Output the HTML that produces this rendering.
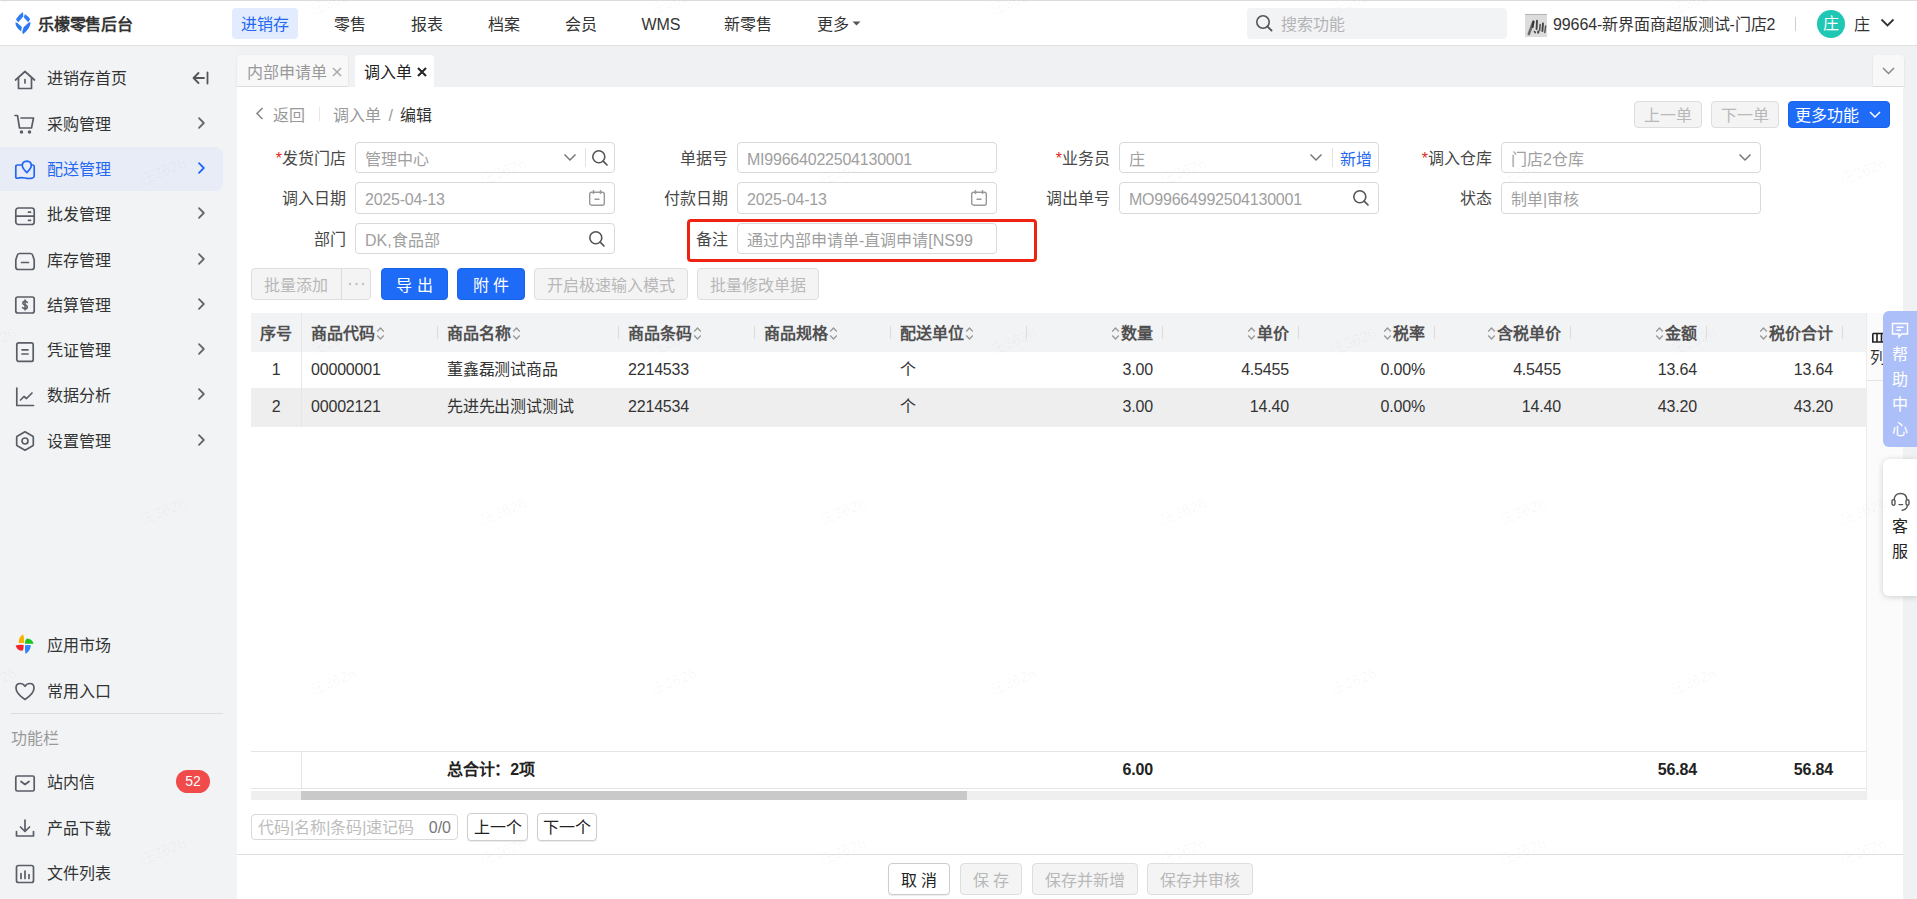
<!DOCTYPE html>
<html lang="zh-CN">
<head>
<meta charset="utf-8">
<title>调入单</title>
<style>
*{box-sizing:border-box;margin:0;padding:0}
html,body{width:1917px;height:899px;overflow:hidden;background:#fff}
body{font-family:"Liberation Sans",sans-serif;font-size:16px;color:#333;position:relative}
.abs{position:absolute}
svg{display:block}
/* header */
#hdr{position:absolute;left:0;top:0;width:1917px;height:46px;background:#fff;border-top:1px solid #dcdcdc;border-bottom:1px solid #dfe0e2}
#logo-t{position:absolute;left:38px;top:14px;font-size:16px;font-weight:bold;line-height:20px;color:#333;letter-spacing:-0.2px;white-space:nowrap}
.nav{position:absolute;top:7px;height:31px;line-height:34px;font-size:16px;color:#333;white-space:nowrap;text-align:center}
.nav.on{background:#e3ecff;color:#2468f2;border-radius:4px}
#srch{position:absolute;left:1247px;top:7px;width:260px;height:31px;background:#f2f3f5;border-radius:4px}
#srch span{position:absolute;left:34px;top:0;line-height:34px;font-size:16px;color:#b4b4b4}
/* sidebar */
#side{position:absolute;left:0;top:46px;width:237px;height:853px;background:#f2f3f5}
.mi{position:absolute;left:0;width:237px;height:44px}
.mi .t{position:absolute;left:47px;top:0;line-height:46px;font-size:16px;color:#333;white-space:nowrap}
.mi .ic{position:absolute;left:14px;top:11px;width:22px;height:22px}
.mi .ar{position:absolute;left:196px;top:14px;width:10px;height:14px}
.mi.on{background:#e8ecf6;border-radius:0 8px 8px 0;width:223px}
.mi.on .t{color:#2468f2}
/* tabs */
#tabs{position:absolute;left:237px;top:46px;width:1680px;height:41px;background:#f0f1f2}
.tab{position:absolute;top:9px;height:33px;line-height:35px;overflow:hidden;font-size:16px;white-space:nowrap;border-radius:4px 4px 0 0;padding-left:9px}
/* panel */
#panel{position:absolute;left:237px;top:87px;width:1666px;height:812px;background:#fff}
#rstrip{position:absolute;left:1903px;top:87px;width:14px;height:812px;background:#f0f1f2}
.lbl{position:absolute;height:32px;line-height:33px;font-size:16px;color:#484848;text-align:right;white-space:nowrap}
.lbl i{font-style:normal;color:#e1251b}
.inp{position:absolute;height:31px;border:1px solid #d9d9d9;border-radius:4px;background:#fff;line-height:29px;font-size:16px;color:#a0a0a0;padding-left:9px;white-space:nowrap;overflow:hidden}
.btn{position:absolute;height:32px;line-height:30px;font-size:16px;text-align:center;border-radius:4px;white-space:nowrap}
.btn.dis{background:#f4f4f4;border:1px solid #dedede;color:#b8b8b8}
.btn.pri{background:#1e6bf8;border:1px solid #1b62e6;color:#fff}
.btn.def{background:#fff;border:1px solid #cdcdcd;color:#222;box-shadow:0 1px 1px rgba(0,0,0,.08)}
/* table */
#tbl{position:absolute;left:251px;top:313px;width:1615px;height:486px}
.th{position:absolute;top:0;height:40px;line-height:41px;font-size:16px;font-weight:bold;color:#505050;white-space:nowrap}
.td{position:absolute;height:35px;line-height:35px;font-size:16px;color:#333;white-space:nowrap;letter-spacing:-0.18px}
.r{text-align:right}
</style>
</head>
<body>
<div id="hdr">
<svg class="abs" style="left:15px;top:11px" width="16" height="23" viewBox="0 0 16 23"><path d="M8 0 L8.3 4.6 L3.3 10.3 L0.9 7.4 Q3 3.2 8 0 Z" fill="#2f7df6"/><path d="M9.8 2 Q13.6 4.5 15.1 7.3 L13.2 10.2 L8.9 5.5 Z" fill="#2f7df6"/><path d="M0.4 10.2 L2.5 11 L6.8 15 L6.2 19.4 Q0.4 15.5 0.4 10.2 Z" fill="#2a78f3"/><path d="M15.6 10.2 Q15.6 16 8 22.3 L7.2 20 L8.6 15.3 L13.8 10.4 Z" fill="#2a78f3"/></svg>
<div id="logo-t">乐檬零售后台</div>
<div class="nav on" style="left:232px;width:66px">进销存</div>
<div class="nav" style="left:334px;width:32px">零售</div>
<div class="nav" style="left:411px;width:32px">报表</div>
<div class="nav" style="left:488px;width:32px">档案</div>
<div class="nav" style="left:565px;width:32px">会员</div>
<div class="nav" style="left:640px;width:42px">WMS</div>
<div class="nav" style="left:724px;width:48px">新零售</div>
<div class="nav" style="left:817px;width:32px">更多</div>
<svg class="abs" style="left:852px;top:20px" width="9" height="5" viewBox="0 0 9 5"><path d="M0.5 0.5 L8.5 0.5 L4.5 4.5 Z" fill="#555"/></svg>
<div id="srch"><svg class="abs" style="left:8px;top:6px" width="19" height="19" viewBox="0 0 19 19"><circle cx="8" cy="8" r="6.2" fill="none" stroke="#555" stroke-width="1.6"/><path d="M12.6 12.6 L16.5 16.5" stroke="#555" stroke-width="1.8" stroke-linecap="round"/></svg><span>搜索功能</span></div>
<svg class="abs" style="left:1525px;top:13px" width="22" height="23" viewBox="0 0 22 23"><rect x="0" y="0" width="22" height="23" fill="#dcdcdc"/><path d="M0 0.5 H22" stroke="#b4b4b4" stroke-width="1"/><g stroke-linecap="round"><path d="M8.3 8 L3.8 20" stroke="#6a6a6a" stroke-width="2.6"/><path d="M8.4 7.6 L7.6 13" stroke="#333" stroke-width="2"/><path d="M12 6.6 L11.6 15" stroke="#444" stroke-width="1.9"/><path d="M15.2 10.5 L14.6 16.5" stroke="#555" stroke-width="1.6"/><path d="M18 9.5 L17.4 17" stroke="#444" stroke-width="1.9"/><path d="M20.6 12 L19.8 18.5" stroke="#555" stroke-width="1.5"/><path d="M9.5 17.5 L10.3 18.6" stroke="#444" stroke-width="1.6"/><path d="M13.2 17.6 L13.2 18.8" stroke="#444" stroke-width="2"/></g></svg>
<div class="abs" style="left:1553px;top:7px;line-height:34px;font-size:16px;color:#333;white-space:nowrap;letter-spacing:-0.1px">99664-新界面商超版测试-门店2</div>
<div class="abs" style="left:1795px;top:16px;width:1px;height:14px;background:#d0d0d0"></div>
<div class="abs" style="left:1817px;top:9px;width:28px;height:28px;border-radius:14px;background:#1ec8b4;color:#fff;font-size:16px;line-height:28px;text-align:center">庄</div>
<div class="abs" style="left:1854px;top:7px;line-height:34px;font-size:16px;color:#333">庄</div>
<svg class="abs" style="left:1880px;top:17px" width="15" height="10" viewBox="0 0 15 10"><path d="M1.5 1.5 L7.5 7.5 L13.5 1.5" fill="none" stroke="#333" stroke-width="1.8"/></svg>
</div>
<div id="side">
<div class="mi" style="top:10px"><svg class="ic" style="top:13px" viewBox="0 0 22 22" fill="none" stroke="#5b5d66" stroke-width="1.7" stroke-linecap="round" stroke-linejoin="round"><path d="M1.5 11 L11 2.5 L20.5 11"/><path d="M4.5 9.5 V19.5 H17.5 V9.5"/><path d="M11 10.5 V14"/></svg><div class="t">进销存首页</div></div>
<div class="mi" style="top:56px"><svg class="ic" viewBox="0 0 22 22" fill="none" stroke="#5b5d66" stroke-width="1.7" stroke-linecap="round" stroke-linejoin="round"><path d="M1 2.5 H3.5 L5.5 15 H17.5 L19.5 5 H7"/><circle cx="7.5" cy="19" r="0.9" fill="#5b5d66"/><circle cx="15.5" cy="19" r="0.9" fill="#5b5d66"/></svg><div class="t">采购管理</div><svg class="ar" viewBox="0 0 10 14" fill="none" stroke="#666" stroke-width="1.8" stroke-linecap="round" stroke-linejoin="round"><path d="M3 2.2 L7.8 7 L3 11.8"/></svg></div>
<div class="mi on" style="top:101px"><svg class="ic" style="top:12px" viewBox="0 0 22 22" fill="none" stroke="#2468f2" stroke-width="1.7" stroke-linecap="round" stroke-linejoin="round"><path d="M8 6 H3.5 Q1.8 6 1.8 7.8 V18 Q1.8 19.5 3.5 19.2 Q7 18 11 19 Q15 20 18.5 19 Q20.2 18.5 20.2 17 V7.8 Q20.2 6 18.5 6 H17.5"/><path d="M12.8 2.2 Q17.3 2.4 17.3 6.6 Q17.3 9.5 12.8 13.5 Q8.3 9.5 8.3 6.6 Q8.3 2.4 12.8 2.2 Z"/></svg><div class="t">配送管理</div><svg class="ar" viewBox="0 0 10 14" fill="none" stroke="#2468f2" stroke-width="1.8" stroke-linecap="round" stroke-linejoin="round"><path d="M3 2.2 L7.8 7 L3 11.8"/></svg></div>
<div class="mi" style="top:146px"><svg class="ic" style="top:13px" viewBox="0 0 22 22" fill="none" stroke="#5b5d66" stroke-width="1.7" stroke-linecap="round" stroke-linejoin="round"><rect x="1.8" y="3" width="18.4" height="16.5" rx="2.5"/><path d="M1.8 11.2 H20.2"/><path d="M14.5 7.2 H16.5 M14.5 15.3 H16.5"/></svg><div class="t">批发管理</div><svg class="ar" viewBox="0 0 10 14" fill="none" stroke="#666" stroke-width="1.8" stroke-linecap="round" stroke-linejoin="round"><path d="M3 2.2 L7.8 7 L3 11.8"/></svg></div>
<div class="mi" style="top:192px"><svg class="ic" style="top:12px" viewBox="0 0 22 22" fill="none" stroke="#5b5d66" stroke-width="1.7" stroke-linecap="round" stroke-linejoin="round"><path d="M5.5 3.5 H16.5 Q18.3 3.5 18.8 5.5 L20.2 10 V17 Q20.2 19.5 17.7 19.5 H4.3 Q1.8 19.5 1.8 17 V10 L3.2 5.5 Q3.7 3.5 5.5 3.5 Z"/><path d="M7.5 12.5 H14.5"/></svg><div class="t">库存管理</div><svg class="ar" viewBox="0 0 10 14" fill="none" stroke="#666" stroke-width="1.8" stroke-linecap="round" stroke-linejoin="round"><path d="M3 2.2 L7.8 7 L3 11.8"/></svg></div>
<div class="mi" style="top:237px"><svg class="ic" viewBox="0 0 22 22" fill="none" stroke="#5b5d66" stroke-width="1.7" stroke-linecap="round" stroke-linejoin="round"><rect x="1.8" y="3" width="18.4" height="16" rx="2"/><path d="M13.3 8.6 Q13 7.3 11 7.3 Q8.8 7.3 8.8 9.1 Q8.8 10.6 11 11 Q13.3 11.4 13.3 13 Q13.3 14.8 11 14.8 Q8.9 14.8 8.6 13.4 M11 6 V16" stroke-width="1.5"/></svg><div class="t">结算管理</div><svg class="ar" viewBox="0 0 10 14" fill="none" stroke="#666" stroke-width="1.8" stroke-linecap="round" stroke-linejoin="round"><path d="M3 2.2 L7.8 7 L3 11.8"/></svg></div>
<div class="mi" style="top:282px"><svg class="ic" style="top:13px" viewBox="0 0 22 22" fill="none" stroke="#5b5d66" stroke-width="1.7" stroke-linecap="round" stroke-linejoin="round"><rect x="2.8" y="1.8" width="16.4" height="18.6" rx="2"/><path d="M8 8.8 H14 M8 13 H14"/></svg><div class="t">凭证管理</div><svg class="ar" viewBox="0 0 10 14" fill="none" stroke="#666" stroke-width="1.8" stroke-linecap="round" stroke-linejoin="round"><path d="M3 2.2 L7.8 7 L3 11.8"/></svg></div>
<div class="mi" style="top:327px"><svg class="ic" style="top:13px" viewBox="0 0 22 22" fill="none" stroke="#5b5d66" stroke-width="1.7" stroke-linecap="round" stroke-linejoin="round"><path d="M2.8 2 V19.5 H19.5"/><path d="M6.5 14 L10 10.5 L12.5 12.5 L18 7"/></svg><div class="t">数据分析</div><svg class="ar" viewBox="0 0 10 14" fill="none" stroke="#666" stroke-width="1.8" stroke-linecap="round" stroke-linejoin="round"><path d="M3 2.2 L7.8 7 L3 11.8"/></svg></div>
<div class="mi" style="top:373px"><svg class="ic" viewBox="0 0 22 22" fill="none" stroke="#5b5d66" stroke-width="1.7" stroke-linecap="round" stroke-linejoin="round"><path d="M11 1.8 L18.8 6.3 Q19.3 6.6 19.3 7.2 V14.8 Q19.3 15.4 18.8 15.7 L11 20.2 L3.2 15.7 Q2.7 15.4 2.7 14.8 V7.2 Q2.7 6.6 3.2 6.3 Z"/><circle cx="11" cy="11" r="3"/></svg><div class="t">设置管理</div><svg class="ar" viewBox="0 0 10 14" fill="none" stroke="#666" stroke-width="1.8" stroke-linecap="round" stroke-linejoin="round"><path d="M3 2.2 L7.8 7 L3 11.8"/></svg></div>
<div class="mi" style="top:577px"><svg class="ic" viewBox="0 0 22 22"><path d="M10 9 Q10.6 3.5 9 0.3 Q4.2 3.5 4.8 9 Z" fill="#f9b100"/><path d="M11 9.7 Q11 5.2 13 4.4 Q18.2 4.6 19.6 9.7 Z" fill="#17c61f"/><path d="M9.7 11 Q9.8 15.2 8.5 16.7 Q3 16.5 1.7 11.4 Q5 10.6 9.7 11 Z" fill="#f3222a"/><path d="M11 11.2 Q10.8 17 11.5 20 Q16.6 17 16.8 11.2 Q14 10.8 11 11.2 Z" fill="#2f86f6"/></svg><div class="t">应用市场</div></div>
<div class="mi" style="top:623px"><svg class="ic" viewBox="0 0 22 22" fill="none" stroke="#5b5d66" stroke-width="1.7" stroke-linecap="round" stroke-linejoin="round"><path d="M11 19.5 Q2 13.5 2 8 Q2 3.5 6.2 3.5 Q9.2 3.5 11 6.3 Q12.8 3.5 15.8 3.5 Q20 3.5 20 8 Q20 13.5 11 19.5 Z"/></svg><div class="t">常用入口</div></div>
<div class="mi" style="top:714px"><svg class="ic" style="top:12px" viewBox="0 0 22 22" fill="none" stroke="#5b5d66" stroke-width="1.7" stroke-linecap="round" stroke-linejoin="round"><rect x="1.8" y="4" width="18.4" height="15" rx="1.5"/><path d="M7 9.5 L11 12.5 L15 9.5"/></svg><div class="t">站内信</div></div>
<div class="mi" style="top:760px"><svg class="ic" viewBox="0 0 22 22" fill="none" stroke="#5b5d66" stroke-width="1.7" stroke-linecap="round" stroke-linejoin="round"><path d="M11 3 V14 M6.5 10 L11 14.5 L15.5 10"/><path d="M2.5 14.5 V19 H19.5 V14.5"/></svg><div class="t">产品下载</div></div>
<div class="mi" style="top:805px"><svg class="ic" style="top:12px" viewBox="0 0 22 22" fill="none" stroke="#5b5d66" stroke-width="1.7" stroke-linecap="round" stroke-linejoin="round"><rect x="2.5" y="2.5" width="17" height="17" rx="2"/><path d="M7 10.5 V15.5 M11 8 V15.5 M15 11.5 V15.5"/></svg><div class="t">文件列表</div></div>
<svg class="abs" style="left:192px;top:25px" width="17" height="14" viewBox="0 0 17 14" fill="none" stroke="#555" stroke-width="1.8" stroke-linecap="round" stroke-linejoin="round"><path d="M1.5 7 H12 M6.5 2 L1.5 7 L6.5 12 M15.5 1.5 V12.5"/></svg>
<div class="abs" style="left:11px;top:667px;width:212px;height:1px;background:#dcdde0"></div>
<div class="abs" style="left:11px;top:681px;line-height:24px;font-size:16px;color:#999">功能栏</div>
<div class="abs" style="left:176px;top:724px;width:34px;height:23px;border-radius:12px;background:#f04a4a;color:#fff;font-size:14px;line-height:23px;text-align:center">52</div>
</div>
<div id="tabs">
<div class="tab" style="left:0;width:111px;background:#f8f8f9;color:#999;box-shadow:0 1px 2px rgba(0,0,0,.12);height:31px;padding-left:10px;line-height:35px">内部申请单<svg style="display:inline-block;vertical-align:1px;margin-left:5px" width="10" height="10" viewBox="0 0 10 10"><path d="M1 1 L9 9 M9 1 L1 9" stroke="#aaa" stroke-width="1.5"/></svg></div>
<div class="tab" style="left:118px;width:79px;background:#fff;color:#222">调入单<svg style="display:inline-block;vertical-align:1px;margin-left:5px" width="10" height="10" viewBox="0 0 10 10"><path d="M1 1 L9 9 M9 1 L1 9" stroke="#222" stroke-width="2"/></svg></div>
<div class="abs" style="left:1636px;top:9px;width:31px;height:31px;background:#f8f8f9;border-radius:4px 4px 0 0;box-shadow:0 1px 2px rgba(0,0,0,.12)"><svg class="abs" style="left:9px;top:12px" width="13" height="8" viewBox="0 0 13 8"><path d="M1 1 L6.5 6.5 L12 1" fill="none" stroke="#888" stroke-width="1.5"/></svg></div>
</div>
<div id="panel"></div>
<div id="rstrip"></div>
<svg class="abs" style="left:255px;top:107px" width="9" height="13" viewBox="0 0 9 13"><path d="M7.5 1 L2 6.5 L7.5 12" fill="none" stroke="#888" stroke-width="1.6"/></svg>
<div class="abs" style="left:273px;top:104px;line-height:24px;font-size:16px;color:#999">返回</div>
<div class="abs" style="left:319px;top:107px;width:1px;height:14px;background:#e6e6e6"></div>
<div class="abs" style="left:333px;top:104px;line-height:24px;font-size:16px;color:#999;white-space:nowrap">调入单 <span style="margin:0 3px">/</span> <span style="color:#333">编辑</span></div>
<div class="btn dis" style="left:1634px;top:101px;width:68px;height:27px;line-height:28px">上一单</div>
<div class="btn dis" style="left:1711px;top:101px;width:68px;height:27px;line-height:28px">下一单</div>
<div class="btn pri" style="left:1788px;top:101px;width:102px;height:27px;line-height:28px;text-align:left;padding-left:6px">更多功能<svg class="abs" style="right:8px;top:9px" width="12" height="8" viewBox="0 0 12 8"><path d="M1 1 L6 6 L11 1" fill="none" stroke="#fff" stroke-width="1.5"/></svg></div>
<div class="lbl" style="left:226px;width:120px;top:142px"><i>*</i>发货门店</div>
<div class="inp" style="left:355px;top:142px;width:260px;height:31px;line-height:34px">管理中心<svg class="abs" style="right:37px;top:10px" width="14" height="9" viewBox="0 0 14 9"><path d="M1.5 1.5 L7 7 L12.5 1.5" fill="none" stroke="#777" stroke-width="1.5"/></svg><div class="abs" style="right:28px;top:5px;width:1px;height:19px;background:#e2e2e2"></div><svg class="abs" style="right:5px;top:6px" width="18" height="18" viewBox="0 0 18 18"><circle cx="7.8" cy="7.8" r="6" fill="none" stroke="#555" stroke-width="1.6"/><path d="M12.2 12.2 L16 16" stroke="#555" stroke-width="1.7" stroke-linecap="round"/></svg></div>
<div class="lbl" style="left:608px;width:120px;top:142px">单据号</div>
<div class="inp" style="left:737px;top:142px;width:260px;height:31px;line-height:34px"><span style="letter-spacing:-0.22px">MI99664022504130001</span></div>
<div class="lbl" style="left:990px;width:120px;top:142px"><i>*</i>业务员</div>
<div class="inp" style="left:1119px;top:142px;width:260px;height:31px;line-height:34px">庄<svg class="abs" style="right:55px;top:10px" width="14" height="9" viewBox="0 0 14 9"><path d="M1.5 1.5 L7 7 L12.5 1.5" fill="none" stroke="#777" stroke-width="1.5"/></svg><div class="abs" style="right:45px;top:5px;width:1px;height:19px;background:#e2e2e2"></div><div class="abs" style="right:6px;top:0;color:#2468f2;font-size:16px">新增</div></div>
<div class="lbl" style="left:1372px;width:120px;top:142px"><i>*</i>调入仓库</div>
<div class="inp" style="left:1501px;top:142px;width:260px;height:31px;line-height:34px">门店2仓库<svg class="abs" style="right:8px;top:10px" width="14" height="9" viewBox="0 0 14 9"><path d="M1.5 1.5 L7 7 L12.5 1.5" fill="none" stroke="#777" stroke-width="1.5"/></svg></div>
<div class="lbl" style="left:226px;width:120px;top:182px">调入日期</div>
<div class="inp" style="left:355px;top:182px;width:260px;height:32px;line-height:33px"><span style="letter-spacing:-0.22px">2025-04-13</span><svg class="abs" style="right:8px;top:6px" width="18" height="18" viewBox="0 0 18 18" fill="none" stroke="#999" stroke-width="1.4"><rect x="1.7" y="3.2" width="14.6" height="13" rx="2"/><path d="M5.5 1 V5 M12.5 1 V5 M6.5 10.3 H11.5"/></svg></div>
<div class="lbl" style="left:608px;width:120px;top:182px">付款日期</div>
<div class="inp" style="left:737px;top:182px;width:260px;height:32px;line-height:33px"><span style="letter-spacing:-0.22px">2025-04-13</span><svg class="abs" style="right:8px;top:6px" width="18" height="18" viewBox="0 0 18 18" fill="none" stroke="#999" stroke-width="1.4"><rect x="1.7" y="3.2" width="14.6" height="13" rx="2"/><path d="M5.5 1 V5 M12.5 1 V5 M6.5 10.3 H11.5"/></svg></div>
<div class="lbl" style="left:990px;width:120px;top:182px">调出单号</div>
<div class="inp" style="left:1119px;top:182px;width:260px;height:32px;line-height:33px"><span style="letter-spacing:-0.22px">MO99664992504130001</span><svg class="abs" style="right:8px;top:6px" width="18" height="18" viewBox="0 0 18 18"><circle cx="7.8" cy="7.8" r="6" fill="none" stroke="#555" stroke-width="1.6"/><path d="M12.2 12.2 L16 16" stroke="#555" stroke-width="1.7" stroke-linecap="round"/></svg></div>
<div class="lbl" style="left:1372px;width:120px;top:182px">状态</div>
<div class="inp" style="left:1501px;top:182px;width:260px;height:32px;line-height:33px">制单|审核</div>
<div class="lbl" style="left:226px;width:120px;top:223px">部门</div>
<div class="inp" style="left:355px;top:223px;width:260px;height:31px;line-height:34px">DK,食品部<svg class="abs" style="right:8px;top:6px" width="18" height="18" viewBox="0 0 18 18"><circle cx="7.8" cy="7.8" r="6" fill="none" stroke="#555" stroke-width="1.6"/><path d="M12.2 12.2 L16 16" stroke="#555" stroke-width="1.7" stroke-linecap="round"/></svg></div>
<div class="lbl" style="left:608px;width:120px;top:223px">备注</div>
<div class="inp" style="left:737px;top:223px;width:260px;height:31px;line-height:34px">通过内部申请单-直调申请[NS99</div>
<div class="abs" style="left:687px;top:219px;width:350px;height:43px;border:3px solid #ee2312;border-radius:4px"></div>
<div class="btn dis" style="left:251px;top:268px;width:120px;height:32px;line-height:33px;text-align:left;padding-left:12px">批量添加<div class="abs" style="left:89px;top:0;width:1px;height:30px;background:#dcdcdc"></div><svg class="abs" style="left:96px;top:13px" width="17" height="4" viewBox="0 0 17 4"><circle cx="2" cy="2" r="1.3" fill="#c4c4c4"/><circle cx="8.5" cy="2" r="1.3" fill="#c4c4c4"/><circle cx="15" cy="2" r="1.3" fill="#c4c4c4"/></svg></div>
<div class="btn pri" style="left:381px;top:268px;width:67px;height:32px;line-height:33px">导 出</div>
<div class="btn pri" style="left:457px;top:268px;width:68px;height:32px;line-height:33px">附 件</div>
<div class="btn dis" style="left:534px;top:268px;width:154px;height:32px;line-height:33px">开启极速输入模式</div>
<div class="btn dis" style="left:697px;top:268px;width:122px;height:32px;line-height:33px">批量修改单据</div>
<div id="tbl">
<div class="abs" style="left:0;top:0;width:1615px;height:39px;background:#f2f3f5"></div>
<div class="abs" style="left:0;top:75px;width:1615px;height:39px;background:#eeeeee"></div>
<div class="abs" style="left:50px;top:0;width:1px;height:114px;background:#e6e6e8"></div>
<div class="th" style="left:0;width:50px;text-align:center">序号</div>
<div class="th" style="left:60px">商品代码<svg style="display:inline-block;vertical-align:-2px;margin:0 1px" width="9" height="15" viewBox="0 0 9 15" fill="none" stroke="#999" stroke-width="1.3"><path d="M1.2 5.5 L4.5 2 L7.8 5.5 M1.2 9.5 L4.5 13 L7.8 9.5"/></svg></div>
<div class="th" style="left:196px">商品名称<svg style="display:inline-block;vertical-align:-2px;margin:0 1px" width="9" height="15" viewBox="0 0 9 15" fill="none" stroke="#999" stroke-width="1.3"><path d="M1.2 5.5 L4.5 2 L7.8 5.5 M1.2 9.5 L4.5 13 L7.8 9.5"/></svg></div>
<div class="th" style="left:377px">商品条码<svg style="display:inline-block;vertical-align:-2px;margin:0 1px" width="9" height="15" viewBox="0 0 9 15" fill="none" stroke="#999" stroke-width="1.3"><path d="M1.2 5.5 L4.5 2 L7.8 5.5 M1.2 9.5 L4.5 13 L7.8 9.5"/></svg></div>
<div class="th" style="left:513px">商品规格<svg style="display:inline-block;vertical-align:-2px;margin:0 1px" width="9" height="15" viewBox="0 0 9 15" fill="none" stroke="#999" stroke-width="1.3"><path d="M1.2 5.5 L4.5 2 L7.8 5.5 M1.2 9.5 L4.5 13 L7.8 9.5"/></svg></div>
<div class="th" style="left:649px">配送单位<svg style="display:inline-block;vertical-align:-2px;margin:0 1px" width="9" height="15" viewBox="0 0 9 15" fill="none" stroke="#999" stroke-width="1.3"><path d="M1.2 5.5 L4.5 2 L7.8 5.5 M1.2 9.5 L4.5 13 L7.8 9.5"/></svg></div>
<div class="th r" style="left:775px;width:127px"><svg style="display:inline-block;vertical-align:-2px;margin:0 1px" width="9" height="15" viewBox="0 0 9 15" fill="none" stroke="#999" stroke-width="1.3"><path d="M1.2 5.5 L4.5 2 L7.8 5.5 M1.2 9.5 L4.5 13 L7.8 9.5"/></svg>数量</div>
<div class="th r" style="left:911px;width:127px"><svg style="display:inline-block;vertical-align:-2px;margin:0 1px" width="9" height="15" viewBox="0 0 9 15" fill="none" stroke="#999" stroke-width="1.3"><path d="M1.2 5.5 L4.5 2 L7.8 5.5 M1.2 9.5 L4.5 13 L7.8 9.5"/></svg>单价</div>
<div class="th r" style="left:1047px;width:127px"><svg style="display:inline-block;vertical-align:-2px;margin:0 1px" width="9" height="15" viewBox="0 0 9 15" fill="none" stroke="#999" stroke-width="1.3"><path d="M1.2 5.5 L4.5 2 L7.8 5.5 M1.2 9.5 L4.5 13 L7.8 9.5"/></svg>税率</div>
<div class="th r" style="left:1183px;width:127px"><svg style="display:inline-block;vertical-align:-2px;margin:0 1px" width="9" height="15" viewBox="0 0 9 15" fill="none" stroke="#999" stroke-width="1.3"><path d="M1.2 5.5 L4.5 2 L7.8 5.5 M1.2 9.5 L4.5 13 L7.8 9.5"/></svg>含税单价</div>
<div class="th r" style="left:1319px;width:127px"><svg style="display:inline-block;vertical-align:-2px;margin:0 1px" width="9" height="15" viewBox="0 0 9 15" fill="none" stroke="#999" stroke-width="1.3"><path d="M1.2 5.5 L4.5 2 L7.8 5.5 M1.2 9.5 L4.5 13 L7.8 9.5"/></svg>金额</div>
<div class="th r" style="left:1455px;width:127px"><svg style="display:inline-block;vertical-align:-2px;margin:0 1px" width="9" height="15" viewBox="0 0 9 15" fill="none" stroke="#999" stroke-width="1.3"><path d="M1.2 5.5 L4.5 2 L7.8 5.5 M1.2 9.5 L4.5 13 L7.8 9.5"/></svg>税价合计</div>
<div class="abs" style="left:186px;top:13px;width:1px;height:13px;background:#dcdcdc"></div>
<div class="abs" style="left:367px;top:13px;width:1px;height:13px;background:#dcdcdc"></div>
<div class="abs" style="left:503px;top:13px;width:1px;height:13px;background:#dcdcdc"></div>
<div class="abs" style="left:639px;top:13px;width:1px;height:13px;background:#dcdcdc"></div>
<div class="abs" style="left:775px;top:13px;width:1px;height:13px;background:#dcdcdc"></div>
<div class="abs" style="left:911px;top:13px;width:1px;height:13px;background:#dcdcdc"></div>
<div class="abs" style="left:1047px;top:13px;width:1px;height:13px;background:#dcdcdc"></div>
<div class="abs" style="left:1183px;top:13px;width:1px;height:13px;background:#dcdcdc"></div>
<div class="abs" style="left:1319px;top:13px;width:1px;height:13px;background:#dcdcdc"></div>
<div class="abs" style="left:1455px;top:13px;width:1px;height:13px;background:#dcdcdc"></div>
<div class="abs" style="left:1591px;top:13px;width:1px;height:13px;background:#dcdcdc"></div>
<div class="td" style="left:0;top:39px;width:50px;text-align:center">1</div>
<div class="td" style="left:60px;top:39px">00000001</div>
<div class="td" style="left:196px;top:39px">董鑫磊测试商品</div>
<div class="td" style="left:377px;top:39px">2214533</div>
<div class="td" style="left:649px;top:39px">个</div>
<div class="td r" style="left:775px;top:39px;width:127px">3.00</div>
<div class="td r" style="left:911px;top:39px;width:127px">4.5455</div>
<div class="td r" style="left:1047px;top:39px;width:127px">0.00%</div>
<div class="td r" style="left:1183px;top:39px;width:127px">4.5455</div>
<div class="td r" style="left:1319px;top:39px;width:127px">13.64</div>
<div class="td r" style="left:1455px;top:39px;width:127px">13.64</div>
<div class="td" style="left:0;top:76px;width:50px;text-align:center">2</div>
<div class="td" style="left:60px;top:76px">00002121</div>
<div class="td" style="left:196px;top:76px">先进先出测试测试</div>
<div class="td" style="left:377px;top:76px">2214534</div>
<div class="td" style="left:649px;top:76px">个</div>
<div class="td r" style="left:775px;top:76px;width:127px">3.00</div>
<div class="td r" style="left:911px;top:76px;width:127px">14.40</div>
<div class="td r" style="left:1047px;top:76px;width:127px">0.00%</div>
<div class="td r" style="left:1183px;top:76px;width:127px">14.40</div>
<div class="td r" style="left:1319px;top:76px;width:127px">43.20</div>
<div class="td r" style="left:1455px;top:76px;width:127px">43.20</div>
<div class="abs" style="left:0;top:438px;width:1615px;height:1px;background:#e4e4e4"></div>
<div class="abs" style="left:0;top:475px;width:1615px;height:1px;background:#e4e4e4"></div>
<div class="abs" style="left:50px;top:439px;width:1px;height:36px;background:#e4e4e4"></div>
<div class="td" style="left:196px;top:438px;font-weight:bold;color:#222;height:37px;line-height:38px">总合计：2项</div>
<div class="td r" style="left:775px;top:438px;width:127px;font-weight:bold;color:#222;height:37px;line-height:38px">6.00</div>
<div class="td r" style="left:1319px;top:438px;width:127px;font-weight:bold;color:#222;height:37px;line-height:38px">56.84</div>
<div class="td r" style="left:1455px;top:438px;width:127px;font-weight:bold;color:#222;height:37px;line-height:38px">56.84</div>
<div class="abs" style="left:0;top:478px;width:1615px;height:9px;background:#efefef"></div>
<div class="abs" style="left:50px;top:478px;width:666px;height:9px;background:#c9c9c9"></div>
</div>
<div class="abs" style="left:1866px;top:313px;width:37px;height:487px;background:#fbfbfc;border-left:1px solid #ececec"></div>
<div class="abs" style="left:1867px;top:380px;width:17px;height:1px;background:#e4e4e4"></div>
<svg class="abs" style="left:1872px;top:332px" width="12" height="11" viewBox="0 0 12 11"><path d="M0.8 1.5 H12 M0.8 1.5 V10 H12 M5 1.5 V10 M9.5 1.5 V10" fill="none" stroke="#222" stroke-width="1.6"/></svg>
<div class="abs" style="left:1870px;top:347px;font-size:16px;line-height:22px;color:#333;width:14px;overflow:hidden;white-space:nowrap">列</div>
<div class="abs" style="left:1883px;top:311px;width:34px;height:136px;background:#adbff9;border-radius:6px 0 0 6px;color:#fff;font-size:16px;line-height:25px;text-align:center;padding-top:31px">帮<br>助<br>中<br>心<svg class="abs" style="left:8px;top:11px" width="18" height="17" viewBox="0 0 18 17" fill="none" stroke="#fff" stroke-width="1.4"><path d="M1.5 1.5 H16.5 V12 H10.5 L8 15 V12 H1.5 Z M5.5 5.2 H12.5 M5.5 8.3 H10"/></svg></div>
<div class="abs" style="left:1883px;top:459px;width:34px;height:137px;background:#fff;border-radius:6px 0 0 6px;box-shadow:0 1px 6px rgba(0,0,0,.18);color:#222;font-size:16px;line-height:25px;text-align:center;padding-top:55px">客<br>服<svg class="abs" style="left:8px;top:33px" width="19" height="20" viewBox="0 0 19 20" fill="none" stroke="#555" stroke-width="1.4" stroke-linecap="round"><path d="M3.2 8 Q3.2 1.5 9.5 1.5 Q15.8 1.5 15.8 8"/><rect x="1" y="7.6" width="3" height="5.6" rx="1.4"/><rect x="15" y="7.6" width="3" height="5.6" rx="1.4"/><path d="M16.4 13.4 Q16 17.6 11.2 18.3"/><path d="M8 12.6 H11.6"/></svg></div>
<div class="inp" style="left:251px;top:814px;width:207px;height:26px;line-height:26px;padding-left:6px;color:#bdbdbd">代码|名称|条码|速记码<span style="position:absolute;right:6px;top:0;color:#777">0/0</span></div>
<div class="btn def" style="left:467px;top:813px;width:61px;height:28px;line-height:28px">上一个</div>
<div class="btn def" style="left:537px;top:813px;width:60px;height:28px;line-height:28px">下一个</div>
<div class="abs" style="left:237px;top:854px;width:1666px;height:1px;background:#dedede"></div>
<div class="btn def" style="left:888px;top:863px;width:62px;height:32px;line-height:33px">取 消</div>
<div class="btn dis" style="left:960px;top:863px;width:62px;height:32px;line-height:33px">保 存</div>
<div class="btn dis" style="left:1032px;top:863px;width:106px;height:32px;line-height:33px">保存并新增</div>
<div class="btn dis" style="left:1147px;top:863px;width:106px;height:32px;line-height:33px">保存并审核</div>
<svg class="abs" style="left:0;top:0;pointer-events:none" width="1917" height="899" font-family="Liberation Sans, sans-serif" font-size="15" fill="#000" fill-opacity="0.035" text-anchor="middle">
<text transform="translate(-5,6) rotate(-22)">庄3626</text>
<text transform="translate(335,6) rotate(-22)">庄3626</text>
<text transform="translate(675,6) rotate(-22)">庄3626</text>
<text transform="translate(1015,6) rotate(-22)">庄3626</text>
<text transform="translate(1355,6) rotate(-22)">庄3626</text>
<text transform="translate(1695,6) rotate(-22)">庄3626</text>
<text transform="translate(2035,6) rotate(-22)">庄3626</text>
<text transform="translate(165,176) rotate(-22)">庄3626</text>
<text transform="translate(505,176) rotate(-22)">庄3626</text>
<text transform="translate(845,176) rotate(-22)">庄3626</text>
<text transform="translate(1185,176) rotate(-22)">庄3626</text>
<text transform="translate(1525,176) rotate(-22)">庄3626</text>
<text transform="translate(1865,176) rotate(-22)">庄3626</text>
<text transform="translate(-5,346) rotate(-22)">庄3626</text>
<text transform="translate(335,346) rotate(-22)">庄3626</text>
<text transform="translate(675,346) rotate(-22)">庄3626</text>
<text transform="translate(1015,346) rotate(-22)">庄3626</text>
<text transform="translate(1355,346) rotate(-22)">庄3626</text>
<text transform="translate(1695,346) rotate(-22)">庄3626</text>
<text transform="translate(2035,346) rotate(-22)">庄3626</text>
<text transform="translate(165,516) rotate(-22)">庄3626</text>
<text transform="translate(505,516) rotate(-22)">庄3626</text>
<text transform="translate(845,516) rotate(-22)">庄3626</text>
<text transform="translate(1185,516) rotate(-22)">庄3626</text>
<text transform="translate(1525,516) rotate(-22)">庄3626</text>
<text transform="translate(1865,516) rotate(-22)">庄3626</text>
<text transform="translate(-5,686) rotate(-22)">庄3626</text>
<text transform="translate(335,686) rotate(-22)">庄3626</text>
<text transform="translate(675,686) rotate(-22)">庄3626</text>
<text transform="translate(1015,686) rotate(-22)">庄3626</text>
<text transform="translate(1355,686) rotate(-22)">庄3626</text>
<text transform="translate(1695,686) rotate(-22)">庄3626</text>
<text transform="translate(2035,686) rotate(-22)">庄3626</text>
<text transform="translate(165,856) rotate(-22)">庄3626</text>
<text transform="translate(505,856) rotate(-22)">庄3626</text>
<text transform="translate(845,856) rotate(-22)">庄3626</text>
<text transform="translate(1185,856) rotate(-22)">庄3626</text>
<text transform="translate(1525,856) rotate(-22)">庄3626</text>
<text transform="translate(1865,856) rotate(-22)">庄3626</text>
</svg>
</body>
</html>
